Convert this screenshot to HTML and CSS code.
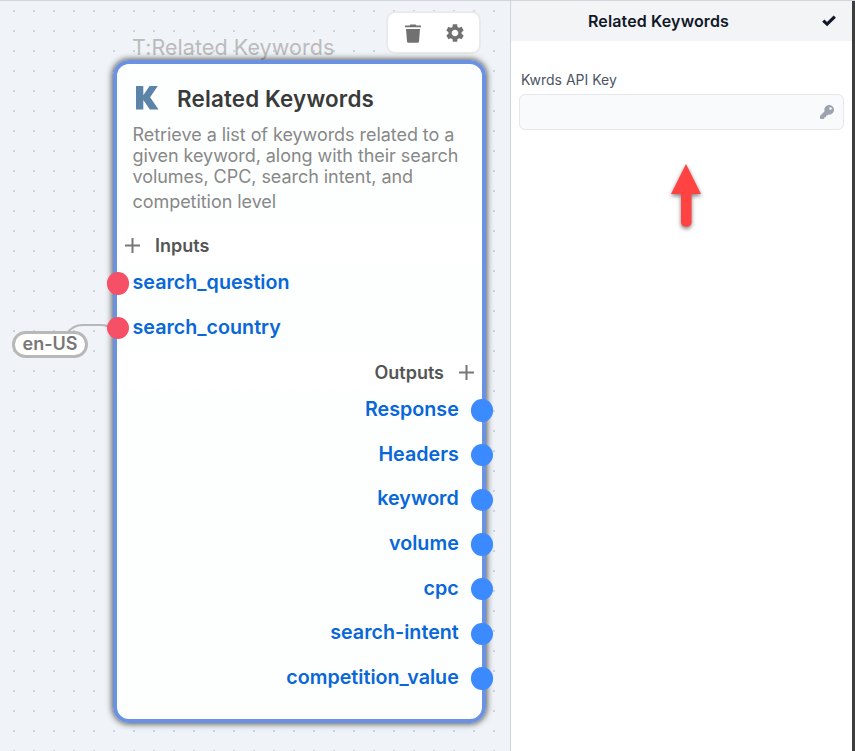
FILE: index.html
```html
<!DOCTYPE html>
<html lang="en">
<head>
<meta charset="utf-8">
<title>Related Keywords</title>
<link rel="stylesheet" href="styles.css">
</head>
<body>
<div class="app">
  <main class="canvas">
    <div class="node-type"><span>T:Related Keywords</span></div>
    <div class="toolbar">
      <svg width="16" height="19" viewBox="0 0 16 19"><path d="M0 3.200V1.500h4.600L5.400.5h5.200l.8 1H16v1.700zM1 5h14l-1 12.400q-.1 1.300-1.400 1.300H3.400q-1.300 0-1.400-1.300z"/></svg>
      <svg width="22" height="22" viewBox="0 0 24 24"><path d="M19.140 12.940c.04-.3.06-.61.06-.94s-.02-.64-.07-.94l2.030-1.580c.18-.14.23-.41.12-.61l-1.920-3.320c-.12-.22-.37-.29-.59-.22l-2.390.96c-.5-.38-1.030-.7-1.620-.94l-.36-2.540c-.04-.24-.24-.41-.48-.41h-3.840c-.24 0-.43.17-.47.41l-.36 2.540c-.59.24-1.130.57-1.620.94l-2.390-.96c-.22-.08-.47 0-.59.22L2.740 8.870c-.12.21-.08.47.12.61l2.030 1.580c-.05.3-.09.63-.09.940s.02.64.07.94l-2.030 1.580c-.18.14-.23.41-.12.610l1.920 3.320c.12.22.37.29.59.22l2.390-.96c.5.38 1.030.7 1.620.94l.36 2.540c.05.24.24.41.48.41h3.840c.24 0 .44-.17.47-.41l.36-2.540c.59-.24 1.130-.56 1.620-.94l2.390.96c.22.08.47 0 .59-.22l1.920-3.320c.12-.22.07-.47-.12-.610zM12 15.600c-1.980 0-3.600-1.620-3.600-3.600s1.620-3.600 3.600-3.600 3.600 1.620 3.600 3.600-1.620 3.600-3.600 3.600z"/></svg>
    </div>
    <svg class="wire" width="56" height="20" viewBox="0 0 56 20"><path d="M1 13C6 7 10 5 16 5H34C40 5 42 6 48 9"/></svg>
    <div class="value-pill"><span>en-US</span></div>
    <section class="node">
      <header class="node-head">
        <svg class="logo" width="23" height="24" viewBox="0 0 23 24"><path d="M0 0h7.300v9.300L13.600 0h8.200l-7.700 11.300L22.600 23.400h-8.700L7.300 14v9.400H0z"/></svg>
        <h1>Related Keywords</h1>
      </header>
      <p class="desc">Retrieve a list of keywords related to a<br>given keyword, along with their search<br>volumes, CPC, search intent, and<br><span class="last">competition level</span></p>
      <div class="band inputs-head"><svg width="15" height="15" viewBox="0 0 15 15"><path d="M0 7.500h15M7.500 0v15"/></svg><span>Inputs</span></div>
      <ul class="ports in">
        <li><i></i><span>search_question</span></li>
        <li><i></i><span>search_country</span></li>
      </ul>
      <div class="band outputs-head"><span>Outputs</span><svg width="15" height="15" viewBox="0 0 15 15"><path d="M0 7.500h15M7.500 0v15"/></svg></div>
      <ul class="ports out">
        <li><span>Response</span><i></i></li>
        <li><span>Headers</span><i></i></li>
        <li><span>keyword</span><i></i></li>
        <li><span>volume</span><i></i></li>
        <li><span>cpc</span><i></i></li>
        <li><span>search-intent</span><i></i></li>
        <li><span>competition_value</span><i></i></li>
      </ul>
    </section>
  </main>
  <aside class="panel">
    <header class="panel-head">
      <h2>Related Keywords</h2>
      <svg width="14" height="12" viewBox="0 0 14 12"><path d="M1.300 5.600 5.100 9.100 12.800 1.600"/></svg>
    </header>
    <div class="field">
      <label>Kwrds API Key</label>
      <div class="input"><svg width="14" height="14" viewBox="0 0 512 512"><path fill-rule="evenodd" d="M512 176c0 97-79 176-176 176-11.200 0-22.200-1.100-32.800-3.100l-24 27c-4.500 5.100-11.100 8.100-17.900 8.100H224v40c0 13.300-10.700 24-24 24h-40v40c0 13.300-10.700 24-24 24H24c-13.300 0-24-10.700-24-24v-78.100c0-6.400 2.500-12.500 7-17l161.800-161.800C162.900 213.800 160 195.200 160 176 160 78.800 238.800 0 336 0c97.300 0 176 78.700 176 176zM336 128c0 26.500 21.500 48 48 48s48-21.500 48-48-21.500-48-48-48-48 21.500-48 48z"/></svg></div>
    </div>
    <svg class="arrow" width="50" height="80" viewBox="0 0 50 80"><path d="M25 9 40 39H30.500V68a5.500 5.500 0 0 1-10.500 0V39H10z"/></svg>
  </aside>
</div>
</body>
</html>
```

FILE: styles.css
```css
* { box-sizing: border-box; }
body, h1, h2, p, ul { margin: 0; padding: 0; }
body { font-family: Inter, sans-serif; background: #fff; overflow: hidden; }
svg { display: block; flex: none; }
.app { display: flex; width: 855px; height: 751px; border-top: 1px solid #d1d5db; }
.canvas {
  position: relative;
  width: 510px;
  background: #f0f4f8 conic-gradient(from 90deg at 18px 18px, #cbd5e1 25%, transparent 0) -5px -9px / 20px 20px;
}
.node-type { position: absolute; left: 132px; top: 33px; font-size: 21.5px; line-height: 26px; letter-spacing: .05px; color: #bbb; white-space: nowrap; }
.toolbar {
  position: absolute; left: 386px; top: 10px; width: 95px; height: 43px;
  display: flex; align-items: center; justify-content: space-between; padding: 1px 13px 0 17px;
  border: 2px solid #e8eaec; border-radius: 9px; background: #fff;
}
.toolbar path { fill: #717171; }
.wire { position: absolute; left: 66px; top: 319px; }
.wire path { fill: none; stroke: #b8b8b8; stroke-width: 2.2; }
.value-pill {
  position: absolute; left: 12px; top: 330px; width: 76px; height: 27px;
  border: 3px solid #b8b8b8; border-radius: 14px; background: #fff;
  color: #777; font-size: 18px; font-weight: 600; line-height: 20px; text-align: center;
}
.node {
  position: absolute; left: 113px; top: 59px; width: 373px; height: 663px;
  border: 4px solid #6b91e2; border-radius: 16px;
  background: rgba(254,255,255,.92);
  box-shadow: 0 0 6px 1px rgba(0,0,0,.65);
}
.node-head { display: flex; align-items: center; height: 60px; padding: 9px 0 0 19px; gap: 18px; }
.logo { margin-top: -2px; }
.logo path { fill: #5b84a8; }
h1 { font-size: 22.4px; line-height: 28px; font-weight: 600; letter-spacing: .16px; color: #3a3a3a; }
.desc { height: 102px; padding-left: 15.5px; font-size: 18px; line-height: 21px; letter-spacing: -.05px; color: #888; white-space: nowrap; }
.last { display: inline-block; line-height: 29px; }
.band { display: flex; align-items: center; height: 38px; padding-top: 1px; background: #fff; font-size: 18px; font-weight: 600; color: #555; }
.band path { stroke: #777; stroke-width: 2; }
.inputs-head { padding-left: 8px; gap: 15px; }
.outputs-head { justify-content: flex-end; padding-right: 8px; gap: 15px; }
.ports { display: flow-root; list-style: none; color: #0967d8; font-size: 19.7px; font-weight: 600; }
.ports li { display: flex; align-items: center; height: 44.7px; }
.ports span { padding-bottom: 3px; }
.ports i { width: 22.4px; height: 22.4px; border-radius: 50%; flex: none; }
.in { height: 89px; }
.in li:first-child, .out li:first-child { margin-top: -3px; }
.in li { margin-left: -10.200px; gap: 3.300px; }
.in i { background: #f55065; }
.out li { justify-content: flex-end; margin-right: -11.200px; gap: 12px; }
.out i { background: #3b8aff; }
.panel { width: 345px; border-left: 1px solid #d1d5db; border-right: 3px solid #3c3d3c; background: #fff; }
.panel-head { display: flex; align-items: center; height: 40px; background: #f3f4f6; padding: 0 16px 0 77px; justify-content: space-between; }
.panel-head svg { margin-top: -1px; }
.panel-head path { fill: none; stroke: #111827; stroke-width: 3.2; }
h2 { font-size: 16px; line-height: 24px; font-weight: 600; letter-spacing: .13px; color: #111827; }
.field { padding: 29px 8px 0; }
label { display: block; padding-left: 2px; font-size: 14px; line-height: 20px; color: #4b5563; }
.input { display: flex; align-items: center; justify-content: flex-end; height: 36px; margin-top: 4px; padding-right: 9px; border: 1px solid #e5e7eb; border-radius: 6px; background: #f9fafb; }
.input path { fill: #9ca3af; }
.arrow { margin: 25px 0 0 150px; overflow: visible; }
.arrow path { fill: #ff4242; filter: drop-shadow(0 2px 2px rgba(0,0,0,.5)); }
```
